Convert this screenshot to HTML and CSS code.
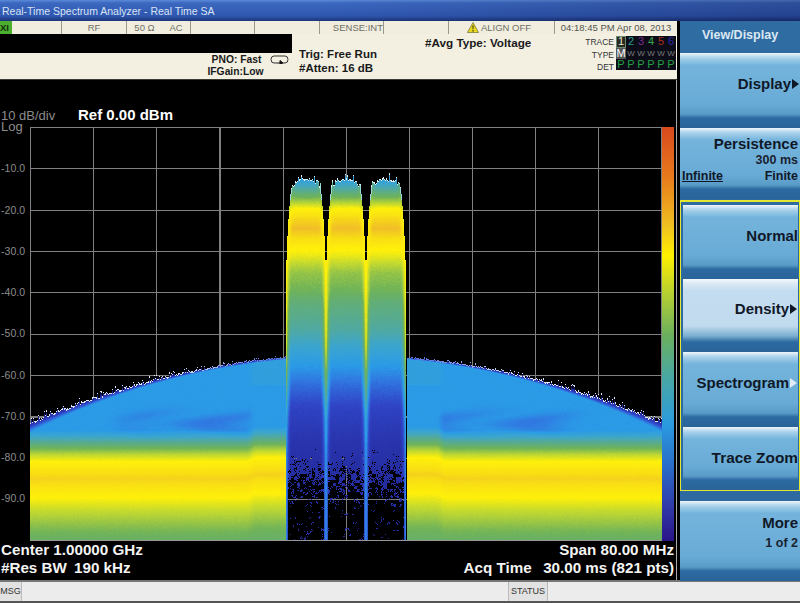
FILE: index.html
```html
<!DOCTYPE html>
<html lang="en">
<head>
    <meta charset="UTF-8">
    <title>Real-Time Spectrum Analyzer</title>
    <link rel="stylesheet" href="styles.css">
</head>
<body>

    <div class="titlebar">Real-Time Spectrum Analyzer - Real Time SA</div>

    <div class="main">
        <div class="screen">
            <!-- Status cells -->
            <div class="status-row">
                <div class="cell cell-x"><span class="x-flag">XI</span></div>
                <div class="cell cell-center">RF</div>
                <div class="cell cell-split"><span>50 &Omega;</span><span>AC</span></div>
                <div class="cell"></div>
                <div class="cell"></div>
                <div class="cell cell-right">SENSE:INT</div>
                <div class="cell"></div>
                <div class="cell cell-center cell-align">
                    <svg class="warn" viewBox="0 0 12 11" width="12" height="11">
                        <path d="M6 0.5 L11.6 10.5 L0.4 10.5 Z" fill="#e8d820" stroke="#5a5a20" stroke-width="0.6"/>
                        <path d="M5.4 3.5 H6.6 L6.3 7.5 H5.7 Z M5.4 8.2 H6.6 V9.5 H5.4 Z" fill="#222"/>
                    </svg>
                    ALIGN OFF
                </div>
                <div class="cell cell-center cell-time">04:18:45 PM Apr 08, 2013</div>
            </div>

            <!-- Settings panel -->
            <div class="info">
                <div class="info-left">
                    <div class="info-black"></div>
                    <div class="info-pno">
                        <div class="pno-text">
                            <div class="pno-line">PNO: Fast</div>
                            <div>IFGain:Low</div>
                        </div>
                        <svg class="pno-icon" viewBox="0 0 19 9" width="19" height="9">
                            <path d="M7 8 H4 Q1 8 1 4.5 Q1 1 4 1 H15 Q18 1 18 4.5 Q18 8 15 8 H13" fill="none" stroke="#333" stroke-width="1"/>
                            <path d="M7 8 H11 M10 5.5 L13 8 L10 9 Z" fill="#111" stroke="#111" stroke-width="1"/>
                        </svg>
                    </div>
                </div>
                <div class="info-trig">
                    <div>Trig: Free Run</div>
                    <div>#Atten: 16 dB</div>
                </div>
                <div class="info-avg">#Avg Type: Voltage</div>
                <div class="trace-labels">
                    <div>TRACE</div>
                    <div>TYPE</div>
                    <div>DET</div>
                </div>
                <div class="trace-table">
                    <span class="t-active">1</span><span class="t2">2</span><span class="t3">3</span><span class="t4">4</span><span class="t5">5</span><span class="t6">6</span>
                    <span class="t-type">M</span><span class="t-w">W</span><span class="t-w">W</span><span class="t-w">W</span><span class="t-w">W</span><span class="t-w">W</span>
                    <span class="t-p">P</span><span class="t-p">P</span><span class="t-p">P</span><span class="t-p">P</span><span class="t-p">P</span><span class="t-p">P</span>
                </div>
            </div>

            <!-- Display -->
            <div class="display">
                <div class="scale-row">
                    <span class="scale">10 dB/div</span>
                    <span class="ref">Ref 0.00 dBm</span>
                </div>
                <div class="plot-row">
                    <div class="y-axis">
                        <div class="y-log">Log</div>
                        <div class="y-tick">-10.0</div>
                        <div class="y-tick">-20.0</div>
                        <div class="y-tick">-30.0</div>
                        <div class="y-tick">-40.0</div>
                        <div class="y-tick">-50.0</div>
                        <div class="y-tick">-60.0</div>
                        <div class="y-tick">-70.0</div>
                        <div class="y-tick">-80.0</div>
                        <div class="y-tick">-90.0</div>
                    </div>
                    <canvas id="spectrum" class="spectrum" width="633" height="414"></canvas>
                    <div class="colorbar"></div>
                </div>
                <div class="readout">
                    <div>
                        <div>Center 1.00000 GHz</div>
                        <div>#Res BW <span class="gap">190 kHz</span></div>
                    </div>
                    <div class="readout-right">
                        <div>Span 80.00 MHz</div>
                        <div>Acq Time &nbsp;<span class="gap">30.00 ms (821 pts)</span></div>
                    </div>
                </div>
            </div>
        </div>

        <!-- Softkeys -->
        <div class="softkeys">
            <div class="menu-title">View/Display</div>
            <div class="key key-display"><span class="key-main">Display</span><span class="arrow"></span></div>
            <div class="key key-persist">
                <div class="key-main persist-name">Persistence</div>
                <div class="key-sub">300 ms</div>
                <div class="persist-opts"><span class="opt-on">Infinite</span><span>Finite</span></div>
            </div>
            <div class="key-group">
                <div class="key key-normal"><span class="key-main">Normal</span></div>
                <div class="key key-density"><span class="key-main">Density</span><span class="arrow"></span></div>
                <div class="key key-spectro"><span class="key-main">Spectrogram</span><span class="arrow arrow-open"></span></div>
                <div class="key key-zoom"><span class="key-main">Trace Zoom</span></div>
            </div>
            <div class="key key-more">
                <div class="key-main">More</div>
                <div class="key-sub more-sub">1 of 2</div>
            </div>
        </div>
    </div>

    <div class="msgbar">
        <div class="msg-label">MSG</div>
        <div class="msg-space"></div>
        <div class="msg-label msg-status">STATUS</div>
    </div>

    <script src="spectrum.js"></script>
</body>
</html>
```

FILE: styles.css
```css
html, body {
    margin: 0;
    width: 800px;
    height: 603px;
    overflow: hidden;
    background-color: #000;
    font-family: "Liberation Sans", Arial, sans-serif;
}
.titlebar {
    height: 21px;
    box-sizing: border-box;
    padding: 5px 0 0 2px;
    font-size: 10.5px;
    line-height: 13px;
    color: #d8e4f4;
    background:
        linear-gradient(to right, rgba(0, 0, 40, 0) 0, rgba(0, 0, 40, 0) 40%, rgba(0, 0, 40, 0.25) 100%),
        linear-gradient(to bottom, #5a8ad8 0, #3c68c0 3px, #2f57b0 16px, #1c3478 21px);
}
.main {
    display: flex;
    height: 559px;
}
.screen {
    width: 677px;
    flex: none;
}

/* Status cells */
.status-row {
    display: grid;
    grid-template-columns: 62px 65px 64px 64px 65px 64px 65px 106px 122px;
    height: 13px;
    background-color: #f1eee0;
}
.cell {
    box-sizing: border-box;
    border-right: 1px solid #9a988c;
    font-size: 9.5px;
    line-height: 13px;
    color: #6e6e66;
    white-space: nowrap;
    overflow: hidden;
}
.cell-center {
    text-align: center;
}
.cell-right {
    text-align: right;
}
.cell-split {
    display: flex;
    justify-content: space-around;
}
.cell-align {
    padding-right: 5px;
}
.cell-time {
    border-right: none;
    color: #55554f;
}
.x-flag {
    display: block;
    width: 12px;
    height: 13px;
    background-color: #4caf30;
    color: #12300c;
    font-weight: bold;
}
.warn {
    vertical-align: -2px;
}

/* Settings panel */
.info {
    display: flex;
    height: 45px;
    background-color: #f3f0e2;
    border-bottom: 1px solid #3a3a36;
    box-sizing: content-box;
    color: #1a1a1a;
    font-weight: bold;
    font-size: 11.5px;
}
.info-left {
    width: 292px;
    flex: none;
}
.info-black {
    height: 19px;
    background-color: #000;
}
.info-pno {
    display: flex;
    justify-content: flex-end;
    padding: 1px 3px 0 0;
}
.pno-text {
    width: 63px;
    text-align: center;
    font-size: 10.3px;
    line-height: 12px;
    margin-right: 3px;
}
.pno-line {
    padding-left: 2px;
}
.pno-icon {
    margin-top: 1px;
}
.info-trig {
    width: 125px;
    flex: none;
    box-sizing: border-box;
    padding: 13px 0 0 7px;
    line-height: 14px;
}
.info-avg {
    width: 175px;
    flex: none;
    padding: 2px 0 0 8px;
    box-sizing: border-box;
    font-size: 11.7px;
    line-height: 14px;
}
.trace-labels {
    width: 30px;
    flex: none;
    padding-top: 2px;
    margin-left: -8px;
    font-size: 8.5px;
    font-weight: normal;
    line-height: 12.5px;
    text-align: right;
    color: #333;
}
.trace-table {
    display: grid;
    grid-template-columns: repeat(6, 10px);
    grid-auto-rows: 11.5px;
    margin: 2px 0 0 2px;
    width: 60px;
    height: 34px;
    background-color: #0c0c18;
    font-size: 11px;
    font-weight: normal;
    line-height: 11.5px;
    text-align: center;
}
.t-active {
    background-color: #2a2a20;
    color: #e8e8d8;
    outline: 1px solid #6a8a70;
    outline-offset: -1px;
}
.t2 { color: #2a9a90; }
.t3 { color: #7a2a90; }
.t4 { color: #3aa850; }
.t5 { color: #a83020; }
.t6 { color: #2a2aa8; }
.t-type {
    background-color: #555;
    color: #fff;
}
.t-w {
    color: #7a7a7a;
    font-size: 8px;
}
.t-p {
    color: #22a040;
}

/* Display */
.display {
    height: 500px;
    box-sizing: border-box;
    padding-top: 27px;
    border-right: 1px solid #aaa;
    color: #fff;
}
.scale-row {
    display: flex;
    align-items: baseline;
    height: 20px;
    padding-left: 1px;
    line-height: 16px;
}
.scale {
    width: 77px;
    font-size: 13px;
    color: #8c8c8c;
}
.ref {
    font-size: 15px;
    font-weight: bold;
}
.plot-row {
    display: flex;
    height: 414px;
}
.y-axis {
    width: 29px;
    flex: none;
    margin-top: -7px;
    color: #8c8c8c;
    font-size: 10.5px;
    text-align: right;
}
.y-log {
    height: 41.25px;
    padding-left: 1px;
    font-size: 13px;
    line-height: 13px;
    text-align: left;
}
.y-tick {
    height: 41.25px;
    padding-right: 4px;
    line-height: 14px;
}
.spectrum {
    display: block;
    width: 633px;
    height: 414px;
    filter: blur(0.45px);
}
.colorbar {
    width: 12px;
    background: linear-gradient(to bottom, #d8481c 0, #e87a1c 12%, #f0c020 24%, #fff000 31%, #b8d030 40%, #6cb05c 50%, #4aa8a0 60%, #2a9ae0 72%, #2a6cc8 82%, #3038a8 92%, #2a1488 100%);
}
.readout {
    display: flex;
    justify-content: space-between;
    padding: 0 2px 0 1px;
    font-size: 15.2px;
    font-weight: bold;
    line-height: 18px;
    color: #f4f4f4;
}
.readout-right {
    text-align: right;
}
.gap {
    margin-left: 3px;
}

/* Softkeys */
.softkeys {
    width: 120px;
    flex: none;
    margin-left: 3px;
    color: #101828;
    background-color: #2c6aa0;
}
.menu-title {
    height: 30px;
    box-sizing: border-box;
    padding-top: 6px;
    text-align: center;
    font-size: 12.5px;
    font-weight: bold;
    line-height: 16px;
    color: #dce8f2;
    background-color: #2f6ca2;
}
.key {
    display: flex;
    align-items: center;
    justify-content: flex-end;
    box-sizing: border-box;
    padding-bottom: 13px;
    background: linear-gradient(to bottom, #eef5fa 0, #a8d0ea 5px, #74b4dc 12px, #68abd6 calc(100% - 24px), #5a9cc8 calc(100% - 14px), #2c6aa2 calc(100% - 10px), #2a6498 100%);
}
.key-main {
    font-size: 15px;
    font-weight: bold;
    line-height: 16px;
}
.key-sub {
    font-size: 12.5px;
    font-weight: bold;
    line-height: 14px;
    padding-top: 1px;
    color: #1a2230;
    text-align: right;
}
.arrow {
    width: 0;
    height: 0;
    margin: 0 1px 0 1px;
    border-top: 5px solid transparent;
    border-bottom: 5px solid transparent;
    border-left: 7px solid #101828;
}
.arrow-open {
    border-left-color: #dfeaf2;
}
.key-display {
    height: 75px;
    margin-top: 2px;
}
.key-persist {
    display: block;
    height: 71px;
    padding: 8px 2px 0 0;
    text-align: right;
}
.persist-name {
    line-height: 16px;
}
.persist-opts {
    display: flex;
    justify-content: space-between;
    padding: 2px 0 0 2px;
    font-size: 12.5px;
    font-weight: bold;
    line-height: 15px;
}
.opt-on {
    text-decoration: underline;
}
.key-group {
    box-sizing: border-box;
    height: 291px;
    margin-top: 1px;
    padding: 3px 1px 0 2px;
    border: 1px solid #e6e830;
    border-top-width: 2px;
}
.key-normal {
    height: 74px;
    padding-right: 0;
}
.key-density {
    height: 73px;
    background: linear-gradient(to bottom, #f2f8fc 0, #d8e8f4 5px, #c4dcf0 12px, #c0daee calc(100% - 26px), #7aaed0 calc(100% - 16px), #2c6aa2 calc(100% - 10px), #2a6498 100%);
}
.key-spectro {
    height: 75px;
}
.key-zoom {
    height: 63px;
    padding-bottom: 2px;
    padding-right: 0;
}
.key-zoom .key-main {
    font-size: 15.4px;
}
.key-more {
    display: block;
    height: 80px;
    margin-top: 10px;
    padding: 14px 2px 0 0;
    text-align: right;
}
.more-sub {
    padding-top: 5px;
}

/* Message bar */
.msgbar {
    display: flex;
    height: 23px;
    box-sizing: border-box;
    border-top: 2px solid #777;
    border-bottom: 2px solid #555;
    background-color: #ececec;
    font-size: 9px;
    line-height: 19px;
    color: #333;
}
.msg-label {
    width: 21px;
    text-align: center;
    background-color: #e2e2e2;
    border-right: 1px solid #bbb;
}
.msg-space {
    width: 486px;
}
.msg-status {
    width: 38px;
    border-left: 1px solid #bbb;
}
```

FILE: spectrum.js
```js
// Draws the density display into the canvas, pixel by pixel
const canvas = document.getElementById('spectrum');
const ctx = canvas.getContext('2d');
const W = canvas.width;
const H = canvas.height;
const X0 = 29;
const Y0 = 127;

// density -> colour
const palette = [
    [0.00, 8, 8, 40],
    [0.05, 24, 30, 130],
    [0.14, 40, 50, 170],
    [0.22, 48, 70, 200],
    [0.30, 48, 120, 225],
    [0.36, 42, 155, 230],
    [0.44, 60, 165, 205],
    [0.52, 85, 170, 150],
    [0.62, 110, 178, 90],
    [0.70, 190, 215, 50],
    [0.78, 255, 240, 10],
    [0.90, 248, 222, 20],
    [1.00, 240, 190, 40]
];

function lookup(stops, v) {
    if (v <= stops[0][0]) return stops[0];
    for (let i = 1; i < stops.length; i++) {
        if (v <= stops[i][0]) {
            const a = stops[i - 1];
            const b = stops[i];
            const f = (v - a[0]) / (b[0] - a[0]);
            return a.map(function(val, k) { return val + (b[k] - val) * f; });
        }
    }
    return stops[stops.length - 1];
}

function curve(stops, y) {
    return lookup(stops, y)[1];
}

function smooth(a, b, v) {
    const t = Math.min(1, Math.max(0, (v - a) / (b - a)));
    return t * t * (3 - 2 * t);
}

function hash(x, y) {
    const s = Math.sin(x * 127.1 + y * 311.7) * 43758.5453;
    return s - Math.floor(s);
}

// density by height inside a channel
const lobeCurve = [
    [178, 0.38], [186, 0.47], [195, 0.60], [203, 0.70], [208, 0.78], [218, 0.92],
    [228, 1.00], [238, 0.90], [248, 0.79], [256, 0.75], [262, 0.71], [272, 0.66],
    [290, 0.62], [302, 0.57], [330, 0.50], [350, 0.42], [365, 0.36], [385, 0.28],
    [410, 0.20], [440, 0.15], [470, 0.12], [541, 0.10]
];
// density by height on the channel edges
const edgeCurve = [
    [190, 0.60], [210, 0.74], [240, 0.80], [300, 0.79], [345, 0.76], [380, 0.64],
    [420, 0.42], [460, 0.36], [541, 0.35]
];
// density by height outside the channels
const outerCurve = [
    [350, 0.36], [430, 0.36], [440, 0.50], [447, 0.61], [455, 0.71], [462, 0.79],
    [478, 0.94], [490, 0.84], [497, 0.78], [510, 0.71], [530, 0.63], [541, 0.60]
];

const centers = [306, 346, 386];

function channelWidth(y) {
    const u = Math.min(1, (y - 178) / 115);
    return 20 - 6 * (1 - u) * (1 - u);
}

function floorY(x) {
    const dx = (x - 346) / 316;
    return 355 + 69 * dx * dx;
}

function gridAt(x, y) {
    const gx = (x - 30) / 63.15;
    const gy = (y - 127) / 41.35;
    return Math.abs(gx - Math.round(gx)) * 63.15 < 0.6 || Math.abs(gy - Math.round(gy)) * 41.35 < 0.6;
}

function put(data, i, c) {
    data[i] = c[0];
    data[i + 1] = c[1];
    data[i + 2] = c[2];
    data[i + 3] = 255;
}

function pixel(x, y) {
    const back = gridAt(x, y) ? [128, 128, 128] : [0, 0, 0];
    if (x < 30 || x > 661 || y > 540) return [0, 0, 0];
    if (y > 539) return [150, 150, 150];

    // channels
    if (x >= 286 && x <= 406) {
        let c = centers[0];
        if (x >= 326) c = centers[1];
        if (x >= 366) c = centers[2];
        const off = x + 0.5 - c;
        const hw = channelWidth(y);
        const e = hw - Math.abs(off);
        if (e < 0) return back;
        const n = Math.abs(off) / 14;
        const spike = Math.pow(hash(x, 1), 3) * 6 + hash(x, 2) * 2;
        const top = 180 - spike + 8 * Math.pow(n, 2.6);
        if (y < top) return back;
        if (y < top + 1.2) return [225, 240, 240];
        if (e < 1 && y < 200) return [150, 215, 215];

        let t = curve(lobeCurve, y);
        const w = Math.pow(Math.max(0, 1 - e / 6), 2);
        t = t + (curve(edgeCurve, y) - t) * w;
        t += (hash(x, y) - 0.5) * 0.02;

        // counts run out towards the noise floor
        if (e > 2 && y > 430) {
            const blob = hash(Math.floor(x / 3), Math.floor(y / 3));
            const fine = hash(x, y + 7);
            const p = smooth(435, 515, y) * 0.85;
            if (blob * 0.55 + fine * 0.45 < p) return back;
        }
        return lookup(palette, t).slice(1);
    }

    // skirts left and right
    const fy = floorY(x);
    const dx = Math.abs(x - 346) / 316;
    const spike = Math.pow(hash(x, 3), 4) * 6 * (0.25 + dx) + hash(x, 4) * 1.5 * (0.4 + dx);
    const top = fy - spike;
    if (y < top) return back;
    if (y < top + 1.2) {
        // the trace fades to blue towards the channels
        const f = smooth(0.2, 0.6, dx);
        return [90 + 130 * f, 120 + 112 * f, 220 + 25 * f];
    }

    const fringe = 1.5 + 6 * dx * dx * dx;
    const near = x < 346 ? smooth(246, 256, x) : smooth(445, 436, x);
    let t = curve(outerCurve, y + near * 4);
    if (y - fy < fringe) {
        t = 0.16 + 0.2 * (y - fy) / fringe;
    }
    // darker patch above the green band
    const py = (y - 422) / 11;
    const patch = Math.exp(-py * py) * smooth(100, 150, x) * smooth(610, 540, x);
    const mottled = 0.6 + 0.4 * Math.sin(x / 17 + Math.sin(y / 6) * 2);
    t -= 0.06 * patch * mottled * (1 - near);
    if (y < 385 && near > 0) t += 0.03 * near;
    t += (hash(x, y) - 0.5) * 0.012;
    return lookup(palette, t).slice(1);
}

const image = ctx.createImageData(W, H);
for (let j = 0; j < H; j++) {
    for (let i = 0; i < W; i++) {
        put(image.data, (j * W + i) * 4, pixel(i + X0, j + Y0));
    }
}
ctx.putImageData(image, 0, 0);
```
